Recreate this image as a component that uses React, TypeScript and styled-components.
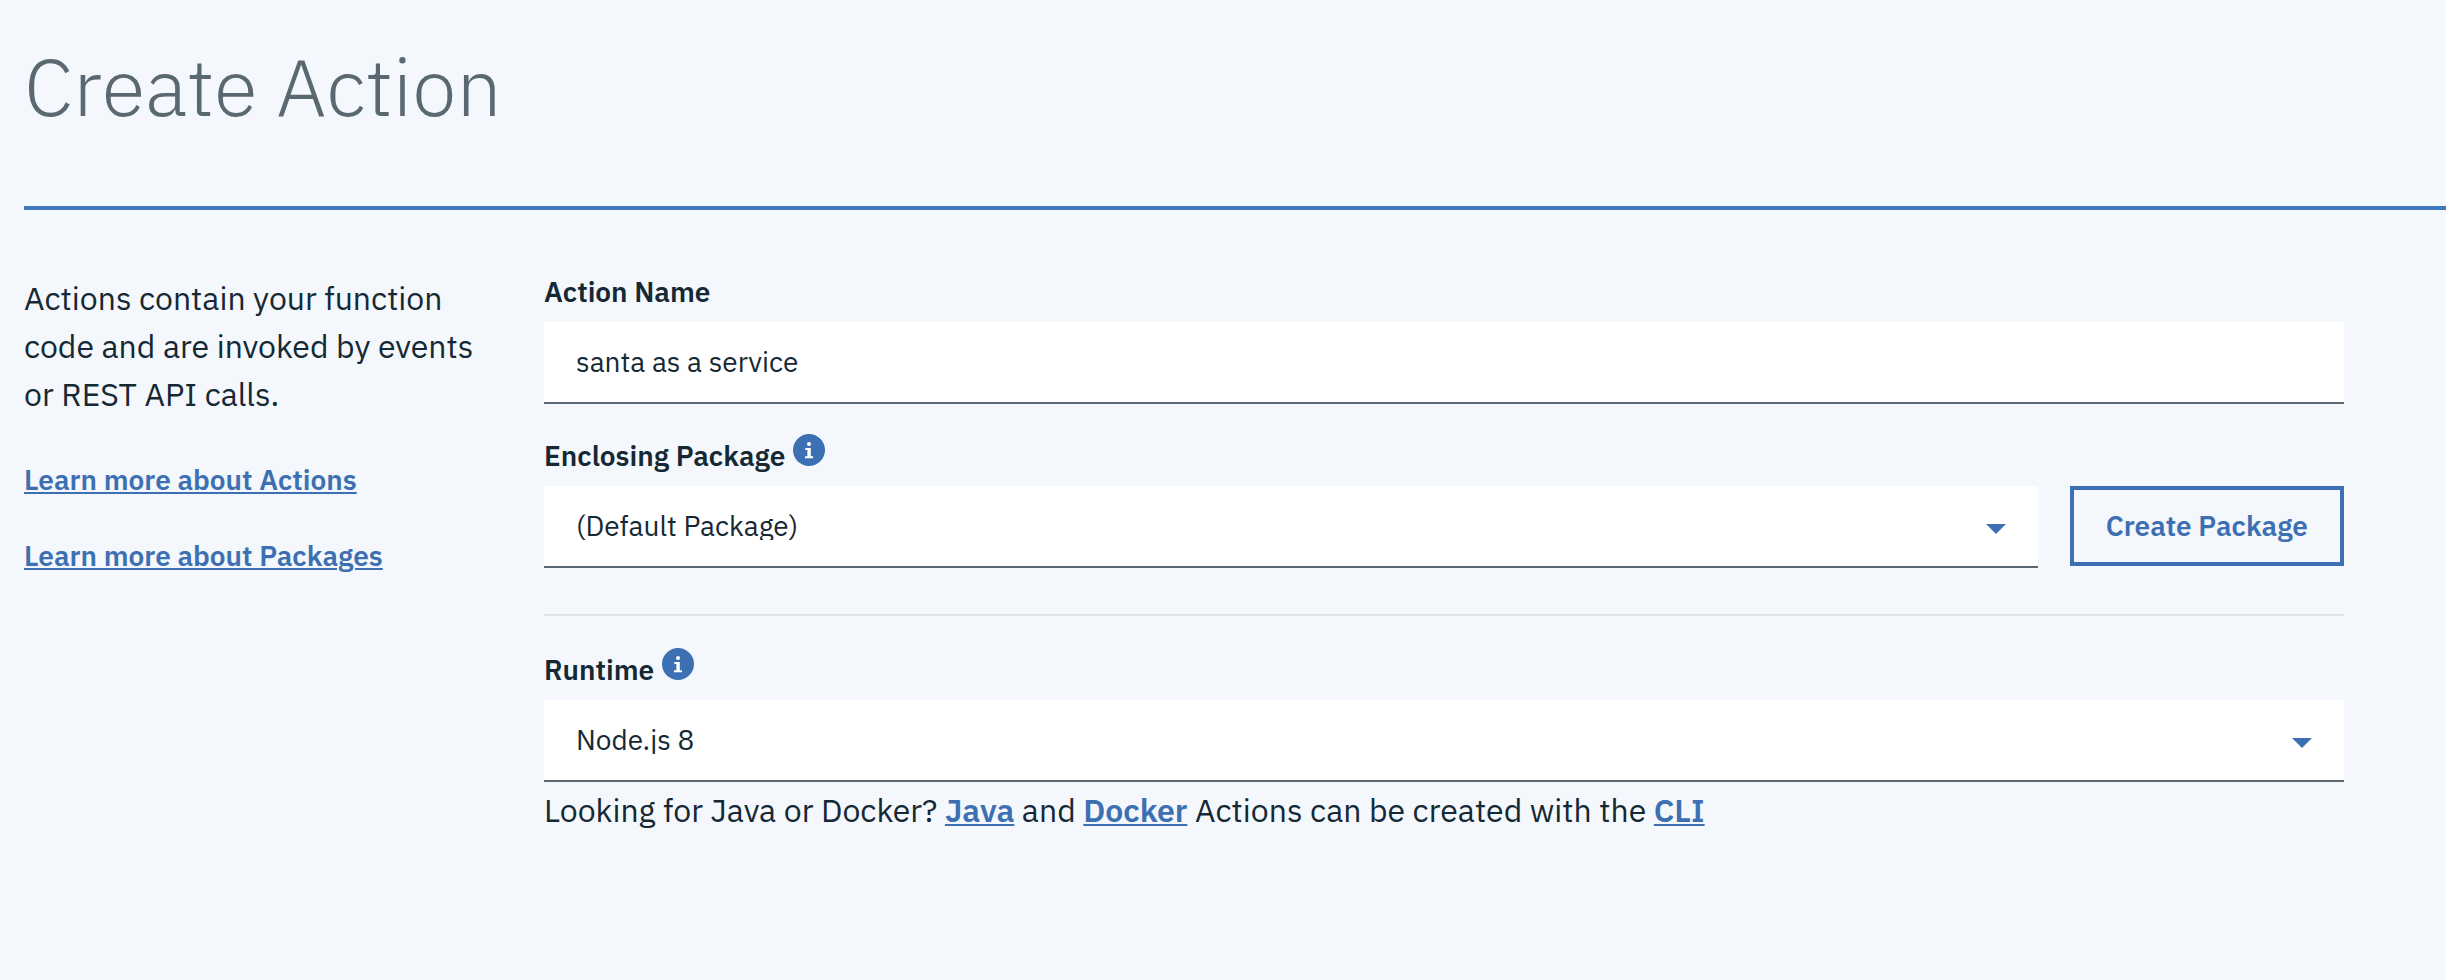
import React, { useState } from "react";
import styled, { createGlobalStyle } from "styled-components";

const color = {
  page: "#f4f7fb",
  field: "#ffffff",
  text: "#152935",
  muted: "#5a6872",
  brand: "#3d70b2",
  rule: "#4178be",
  divider: "#dfe3e6",
};

const GlobalStyle = createGlobalStyle`
  *, *::before, *::after { box-sizing: border-box; }
  body {
    margin: 0;
    background: ${color.page};
    color: ${color.text};
    font-family: "IBM Plex Sans", Roboto, "Liberation Sans", sans-serif;
    font-size: 32px;
    line-height: 48px;
  }
`;

const Page = styled.div`
  padding: 38px 0 40px 24px;
`;

const PageHeader = styled.header`
  padding-bottom: 72px;
  border-bottom: 4px solid ${color.rule};
`;

const Title = styled.h1`
  margin: 0;
  color: ${color.muted};
  font-size: 80px;
  font-weight: 300;
  line-height: 96px;
`;

const Content = styled.div`
  display: grid;
  grid-template-columns: 464px minmax(0, 1fr);
  column-gap: 56px;
  padding: 60px 102px 0 0;

  @media (max-width: 1100px) {
    grid-template-columns: minmax(0, 1fr);
    row-gap: 40px;
    padding-right: 24px;
  }
`;

const Sidebar = styled.aside`
  padding-top: 4px;
`;

const Intro = styled.p`
  margin: 0 0 42px;
`;

const LinkList = styled.nav`
  display: flex;
  flex-direction: column;
  align-items: flex-start;
  gap: 36px;
  font-size: 28px;
  line-height: 40px;
`;

const TextLink = styled.a`
  color: ${color.brand};
  font-weight: 600;
  text-decoration: underline;
  text-decoration-thickness: 2px;
  text-underline-offset: 2px;
`;

const Form = styled.form`
  display: flex;
  flex-direction: column;
`;

const FieldRow = styled.div`
  display: flex;
  align-items: flex-end;
  gap: 32px;
  margin-top: 30px;
`;

const Field = styled.div`
  flex: 1;
  min-width: 0;
`;

const FieldHead = styled.div`
  display: flex;
  align-items: flex-end;
  gap: 8px;
  height: 38px;
  margin-bottom: 14px;
`;

const Label = styled.label`
  font-size: 28px;
  font-weight: 600;
  line-height: 32px;
`;

const InfoButton = styled.button`
  align-self: flex-start;
  width: 32px;
  height: 32px;
  padding: 0;
  border: 0;
  background: none;
  cursor: pointer;

  svg { display: block; }
`;

const TextInput = styled.input`
  display: block;
  width: 100%;
  height: 82px;
  padding: 0 32px 2px;
  border: 0;
  border-bottom: 2px solid ${color.muted};
  border-radius: 0;
  background: ${color.field};
  color: ${color.text};
  font: inherit;
  font-size: 28px;
  line-height: 36px;
`;

const SelectBox = styled.div`
  position: relative;
`;

const Select = styled.select`
  display: block;
  width: 100%;
  height: 82px;
  padding: 22px 64px 26px 32px;
  appearance: none;
  border: 0;
  border-bottom: 2px solid ${color.muted};
  border-radius: 0;
  background: ${color.field};
  color: ${color.text};
  font: inherit;
  font-size: 28px;
  line-height: 36px;
`;

const Arrow = styled.svg`
  position: absolute;
  top: 38px;
  right: 32px;
  pointer-events: none;
`;

const OutlineButton = styled.button`
  height: 80px;
  margin-bottom: 2px;
  padding: 0 32px;
  border: 4px solid ${color.brand};
  background: transparent;
  color: ${color.brand};
  font: inherit;
  font-size: 28px;
  font-weight: 600;
  line-height: 36px;
  white-space: nowrap;
  cursor: pointer;
`;

const Divider = styled.hr`
  width: 100%;
  height: 2px;
  margin: 46px 0 2px;
  border: 0;
  background: ${color.divider};
`;

const Hint = styled.p`
  margin: 4px 0 0;
`;

function Info({ about }: { about: string }) {
  return (
    <InfoButton type="button" aria-label={`About ${about}`}>
      <svg width="32" height="32" viewBox="0 0 32 32" aria-hidden="true">
        <circle cx="16" cy="16" r="16" fill={color.brand} />
        <circle cx="16" cy="10" r="2" fill="#fff" />
        <path d="M12.3 14H17.8V22.2H20V24.2H12V22.2H14.4V16H12.3Z" fill="#fff" />
      </svg>
    </InfoButton>
  );
}

interface DropdownProps {
  id: string;
  options: string[];
}

function Dropdown({ id, options }: DropdownProps) {
  return (
    <SelectBox>
      <Select id={id}>
        {options.map((option) => (
          <option key={option}>{option}</option>
        ))}
      </Select>
      <Arrow width="20" height="10" viewBox="0 0 20 10" aria-hidden="true">
        <path d="M0 0H20L10 10Z" fill={color.brand} />
      </Arrow>
    </SelectBox>
  );
}

export default function App() {
  const [name, setName] = useState("santa as a service");

  return (
    <>
      <GlobalStyle />
      <Page>
        <PageHeader>
          <Title>Create Action</Title>
        </PageHeader>
        <Content>
          <Sidebar>
            <Intro>
              Actions contain your function code and are invoked by events or REST API calls.
            </Intro>
            <LinkList>
              <TextLink href="#actions">Learn more about Actions</TextLink>
              <TextLink href="#packages">Learn more about Packages</TextLink>
            </LinkList>
          </Sidebar>
          <Form>
            <Field>
              <FieldHead>
                <Label htmlFor="action-name">Action Name</Label>
              </FieldHead>
              <TextInput
                id="action-name"
                type="text"
                value={name}
                onChange={(event) => setName(event.target.value)}
              />
            </Field>
            <FieldRow>
              <Field>
                <FieldHead>
                  <Label htmlFor="package">Enclosing Package</Label>
                  <Info about="packages" />
                </FieldHead>
                <Dropdown id="package" options={["(Default Package)"]} />
              </Field>
              <OutlineButton type="button">Create Package</OutlineButton>
            </FieldRow>
            <Divider />
            <FieldRow>
              <Field>
                <FieldHead>
                  <Label htmlFor="runtime">Runtime</Label>
                  <Info about="runtimes" />
                </FieldHead>
                <Dropdown id="runtime" options={["Node.js 8"]} />
              </Field>
            </FieldRow>
            <Hint>
              Looking for Java or Docker? <TextLink href="#java">Java</TextLink> and{" "}
              <TextLink href="#docker">Docker</TextLink> Actions can be created with the{" "}
              <TextLink href="#cli">CLI</TextLink>
            </Hint>
          </Form>
        </Content>
      </Page>
    </>
  );
}
